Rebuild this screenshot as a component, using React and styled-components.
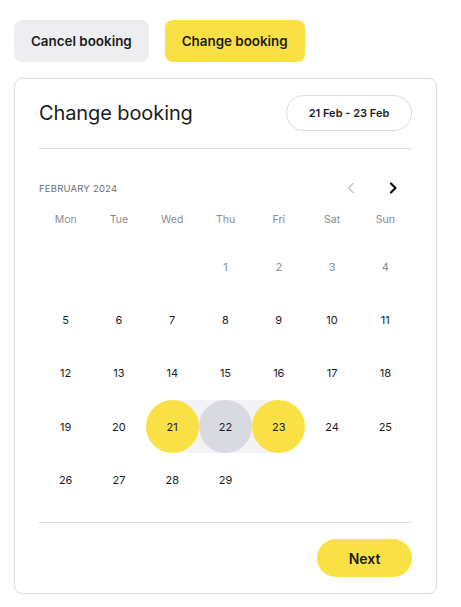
import React from "react"
import styled, { createGlobalStyle } from "styled-components"

const YELLOW = "#f9e145"
const LINE = "#dcdce2"

const Global = createGlobalStyle`
  body {
    margin: 0;
    background: #ffffff;
    font-family: Inter, "Noto Sans", sans-serif;
    color: #1c1c1e;
  }
`

const Page = styled.div`
  padding: 20px 14px;
  width: 423px;
`

const Actions = styled.div`
  display: flex;
  gap: 16px;
`

const ActionButton = styled.button`
  height: 42px;
  padding: 0 17px;
  border: none;
  border-radius: 8px;
  background: ${(p) => (p.$primary ? YELLOW : "#eeeef1")};
  font-family: inherit;
  font-size: 13.4px;
  font-weight: 600;
  color: #1c1c1e;
`

const Card = styled.div`
  margin-top: 16px;
  border: 1px solid ${LINE};
  border-radius: 8px;
  padding: 16px 24px 16px;
`

const Header = styled.div`
  display: flex;
  align-items: center;
  justify-content: space-between;
  height: 36px;
`

const Title = styled.h2`
  margin: 0;
  font-size: 20px;
  font-weight: 400;
  letter-spacing: -0.1px;
`

const DatePill = styled.div`
  height: 36px;
  width: 126px;
  box-sizing: border-box;
  border: 1px solid ${LINE};
  border-radius: 18px;
  display: flex;
  align-items: center;
  justify-content: center;
  font-size: 11px;
  font-weight: 600;
`

const Divider = styled.div`
  height: 1px;
  background: ${LINE};
  margin-top: ${(p) => p.$top}px;
`

const MonthRow = styled.div`
  margin-top: 29px;
  height: 20px;
  display: flex;
  align-items: center;
  justify-content: space-between;
`

const MonthLabel = styled.span`
  font-size: 9.5px;
  color: #6e6e76;
  letter-spacing: 0.2px;
`

const Nav = styled.div`
  display: flex;
  gap: 30px;
  padding-right: 13px;
`

const Arrow = styled.svg`
  width: 12px;
  height: 12px;
  color: ${(p) => (p.$disabled ? "#c9c9cd" : "#111")};
`

const Grid = styled.div`
  display: grid;
  grid-template-columns: repeat(7, 1fr);
  margin-top: ${(p) => p.$top}px;
`

const WeekDay = styled.div`
  height: 20px;
  display: flex;
  align-items: center;
  justify-content: center;
  font-size: 10.5px;
  color: #8a8a90;
`

const Cell = styled.div`
  height: 53.3px;
  display: flex;
  align-items: center;
  justify-content: center;
  background: ${(p) =>
    p.$range === "start"
      ? "linear-gradient(to right, transparent 50%, #f3f3f5 50%)"
      : p.$range === "mid"
      ? "#f3f3f5"
      : p.$range === "end"
      ? "linear-gradient(to right, #f3f3f5 50%, transparent 50%)"
      : "transparent"};
`

const Day = styled.div`
  width: 53px;
  height: 53px;
  border-radius: 50%;
  display: flex;
  align-items: center;
  justify-content: center;
  font-size: 11px;
  color: ${(p) => (p.$muted ? "#8a8a90" : "#1c1c1e")};
  background: ${(p) =>
    p.$state === "edge" ? YELLOW : p.$state === "mid" ? "#d9d9e2" : "transparent"};
`

const Footer = styled.div`
  display: flex;
  justify-content: flex-end;
  margin-top: 16px;
`

const NextButton = styled.button`
  height: 38px;
  width: 95px;
  border: none;
  border-radius: 19px;
  background: ${YELLOW};
  font-family: inherit;
  font-size: 14px;
  font-weight: 600;
  color: #1c1c1e;
`

const weekDays = ["Mon", "Tue", "Wed", "Thu", "Fri", "Sat", "Sun"]

const days = [null, null, null]
for (let d = 1; d <= 29; d++) days.push(d)

function rangeOf(d) {
  if (d === 21) return "start"
  if (d === 22) return "mid"
  if (d === 23) return "end"
  return null
}

function stateOf(d) {
  if (d === 21 || d === 23) return "edge"
  if (d === 22) return "mid"
  return null
}

export default function App() {
  return (
    <Page>
      <Global />
      <Actions>
        <ActionButton>Cancel booking</ActionButton>
        <ActionButton $primary>Change booking</ActionButton>
      </Actions>
      <Card>
        <Header>
          <Title>Change booking</Title>
          <DatePill>21 Feb - 23 Feb</DatePill>
        </Header>
        <Divider $top={17} />
        <MonthRow>
          <MonthLabel>FEBRUARY 2024</MonthLabel>
          <Nav>
            <Arrow $disabled viewBox="0 0 12 12" fill="none">
              <path d="M8 1.5L3.5 6L8 10.5" stroke="currentColor" strokeWidth="1.6" strokeLinecap="round" strokeLinejoin="round" />
            </Arrow>
            <Arrow viewBox="0 0 12 12" fill="none">
              <path d="M4 1.5L8.5 6L4 10.5" stroke="currentColor" strokeWidth="2.2" strokeLinecap="round" strokeLinejoin="round" />
            </Arrow>
          </Nav>
        </MonthRow>
        <Grid $top={11}>
          {weekDays.map((w) => (
            <WeekDay key={w}>{w}</WeekDay>
          ))}
        </Grid>
        <Grid $top={11}>
          {days.map((d, i) => (
            <Cell key={i} $range={rangeOf(d)}>
              {d && (
                <Day $muted={d <= 4} $state={stateOf(d)}>
                  {d}
                </Day>
              )}
            </Cell>
          ))}
        </Grid>
        <Divider $top={16} />
        <Footer>
          <NextButton>Next</NextButton>
        </Footer>
      </Card>
    </Page>
  )
}
